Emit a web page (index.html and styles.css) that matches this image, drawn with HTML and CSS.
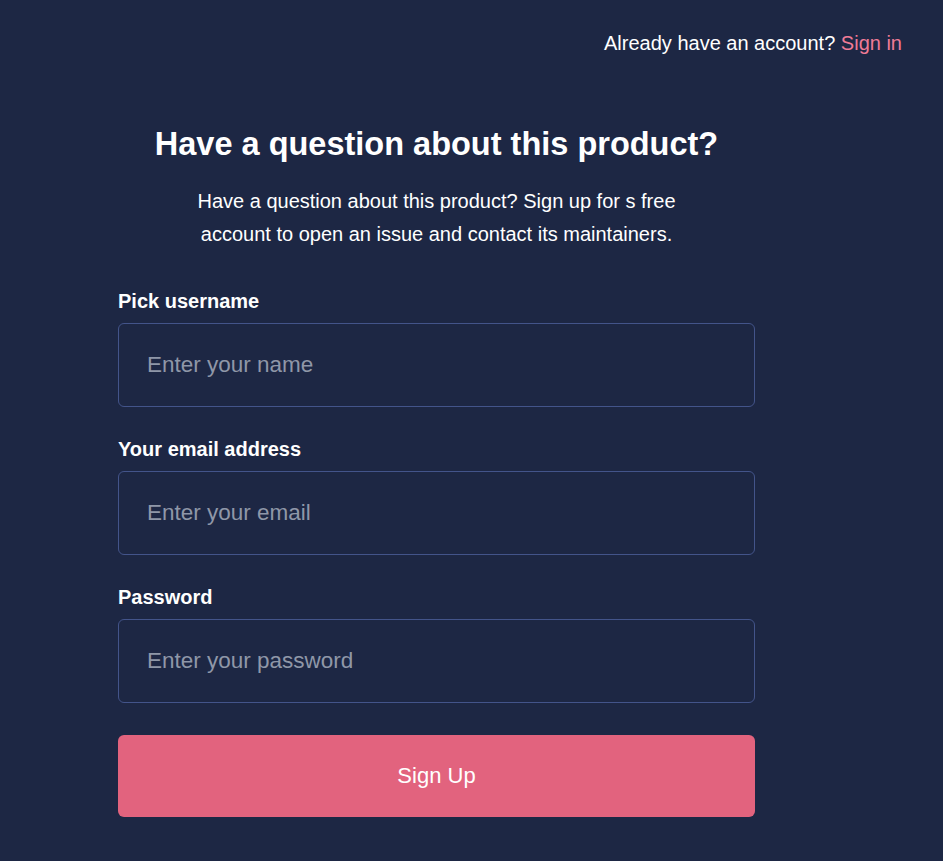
FILE: index.html
```html
<!DOCTYPE html>
<html>
<head>
<meta charset="utf-8">
<link rel="stylesheet" href="styles.css">
</head>
<body>
<header class="topbar">
  <span class="topbar-text">Already have an account? <a class="signin" href="#">Sign in</a></span>
</header>
<main class="form-wrap">
  <h1 class="title">Have a question about this product?</h1>
  <p class="lead">Have a question about this product? Sign up for s free account to open an issue and contact its maintainers.</p>
  <form class="form">
    <div class="field">
      <label class="label">Pick username</label>
      <input class="input" type="text" placeholder="Enter your name">
    </div>
    <div class="field">
      <label class="label">Your email address</label>
      <input class="input" type="email" placeholder="Enter your email">
    </div>
    <div class="field">
      <label class="label">Password</label>
      <input class="input" type="password" placeholder="Enter your password">
    </div>
    <button class="submit" type="button">Sign Up</button>
  </form>
</main>
</body>
</html>
```
FILE: styles.css
```css
html, body {
  margin: 0;
  padding: 0;
  background: #1d2744;
  font-family: "Liberation Sans", Arial, sans-serif;
  color: #ffffff;
}
body {
  min-height: 861px;
}
.topbar {
  display: flex;
  justify-content: flex-end;
  padding: 32px 41px 0 0;
  font-size: 20px;
  line-height: 22px;
}
.signin {
  color: #ef7b96;
  text-decoration: none;
}
.form-wrap {
  width: 637px;
  margin: 0 0 0 118px;
  padding-top: 70px;
}
.title {
  margin: 0;
  text-align: center;
  font-size: 32.5px;
  line-height: 40px;
  font-weight: 700;
}
.lead {
  margin: 21px auto 0;
  max-width: 520px;
  text-align: center;
  font-size: 20px;
  line-height: 33px;
}
.form {
  display: flex;
  flex-direction: column;
  gap: 31px;
  margin-top: 39px;
}
.field {
  display: flex;
  flex-direction: column;
}
.label {
  font-size: 20px;
  line-height: 22px;
  font-weight: 700;
  margin-bottom: 11px;
}
.input {
  box-sizing: border-box;
  height: 84px;
  width: 100%;
  background: transparent;
  border: 1px solid #43548a;
  border-radius: 6px;
  padding: 0 28px;
  font-family: "Liberation Sans", Arial, sans-serif;
  font-size: 22.5px;
  color: #ffffff;
  outline: none;
}
.input::placeholder {
  color: #8f97a8;
}
.submit {
  margin-top: 1px;
  height: 82px;
  width: 100%;
  border: none;
  border-radius: 6px;
  background: #e2637e;
  color: #ffffff;
  font-family: "Liberation Sans", Arial, sans-serif;
  font-size: 22px;
}
```
